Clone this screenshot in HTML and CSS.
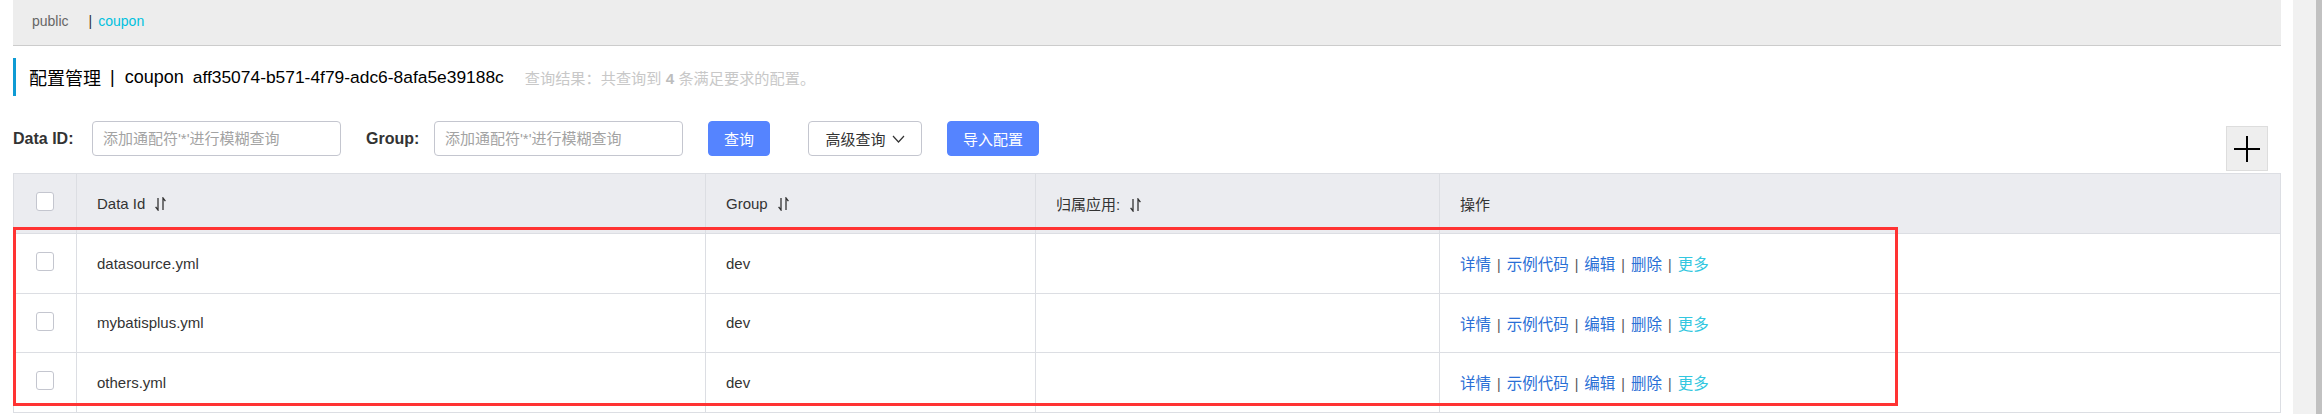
FILE: index.html
```html
<!DOCTYPE html>
<html lang="zh-CN">
<head>
<meta charset="utf-8">
<title>配置管理</title>
<link rel="stylesheet" href="styles.css">
</head>
<body>
<div class="app">
  <div class="page">
    <div class="ns-bar">
      <span class="ns-item">public</span>
      <span class="ns-sep">|</span>
      <span class="ns-item ns-active">coupon</span>
    </div>

    <div class="title">
      <span class="title-main">配置管理</span>
      <span class="title-sep">|</span>
      <span class="title-ns">coupon</span>
      <span class="title-id">aff35074-b571-4f79-adc6-8afa5e39188c</span>
      <span class="title-result">查询结果：共查询到 <b>4</b> 条满足要求的配置。</span>
    </div>

    <div class="search">
      <label class="search-label lbl-id">Data ID:</label>
      <input class="search-input" type="text" placeholder="添加通配符'*'进行模糊查询">
      <label class="search-label lbl-group">Group:</label>
      <input class="search-input" type="text" placeholder="添加通配符'*'进行模糊查询">
      <button class="btn btn-primary btn-query">查询</button>
      <button class="btn btn-normal btn-adv">高级查询<svg class="chev" width="13" height="8" viewBox="0 0 13 8"><path d="M1 1 L6.5 7 L12 1" fill="none" stroke="#333" stroke-width="1.2"/></svg></button>
      <button class="btn btn-primary btn-import">导入配置</button>
      <button class="plus-btn" aria-label="add"><svg width="26" height="26" viewBox="0 0 26 26"><path d="M0 13 H26 M13 0 V26" stroke="#000" stroke-width="2"/></svg></button>
    </div>

    <div class="table-wrap">
      <table class="cfg-table">
        <colgroup>
          <col class="c-check"><col class="c-id"><col class="c-group"><col class="c-app"><col>
        </colgroup>
        <thead>
          <tr>
            <th class="cell-check"><span class="checkbox"></span></th>
            <th>Data Id<svg class="sort" width="11" height="14" viewBox="0 0 11 14"><path d="M3 1 V13 L0.6 9.8 M8 13 V1 L10.4 4.2" fill="none" stroke="#333" stroke-width="1.3"/></svg></th>
            <th>Group<svg class="sort" width="11" height="14" viewBox="0 0 11 14"><path d="M3 1 V13 L0.6 9.8 M8 13 V1 L10.4 4.2" fill="none" stroke="#333" stroke-width="1.3"/></svg></th>
            <th>归属应用:<svg class="sort" width="11" height="14" viewBox="0 0 11 14"><path d="M3 1 V13 L0.6 9.8 M8 13 V1 L10.4 4.2" fill="none" stroke="#333" stroke-width="1.3"/></svg></th>
            <th>操作</th>
          </tr>
        </thead>
        <tbody>
          <tr>
            <td class="cell-check"><span class="checkbox"></span></td>
            <td>datasource.yml</td>
            <td>dev</td>
            <td></td>
            <td class="ops"><a>详情</a><span class="op-sep">|</span><a>示例代码</a><span class="op-sep">|</span><a>编辑</a><span class="op-sep">|</span><a>删除</a><span class="op-sep">|</span><a class="more">更多</a></td>
          </tr>
          <tr>
            <td class="cell-check"><span class="checkbox"></span></td>
            <td>mybatisplus.yml</td>
            <td>dev</td>
            <td></td>
            <td class="ops"><a>详情</a><span class="op-sep">|</span><a>示例代码</a><span class="op-sep">|</span><a>编辑</a><span class="op-sep">|</span><a>删除</a><span class="op-sep">|</span><a class="more">更多</a></td>
          </tr>
          <tr>
            <td class="cell-check"><span class="checkbox"></span></td>
            <td>others.yml</td>
            <td>dev</td>
            <td></td>
            <td class="ops"><a>详情</a><span class="op-sep">|</span><a>示例代码</a><span class="op-sep">|</span><a>编辑</a><span class="op-sep">|</span><a>删除</a><span class="op-sep">|</span><a class="more">更多</a></td>
          </tr>
        </tbody>
      </table>
      <div class="highlight"></div>
    </div>
  </div>
  <div class="scrollbar"><div class="scroll-thumb"></div></div>
</div>
</body>
</html>
```

FILE: styles.css
```css
* { box-sizing: border-box; }

html, body {
  margin: 0;
  padding: 0;
  background: #fff;
  height: 414px;
  overflow: hidden;
}

body {
  font-family: "Liberation Sans", "Noto Sans CJK SC", sans-serif;
  font-size: 14px;
  color: #333;
}

.app {
  display: flex;
  height: 414px;
}

.page {
  flex: 1;
  padding: 0 12px 0 13px;
  min-width: 0;
}

.scrollbar {
  width: 29px;
  background: #f1f1f1;
  display: flex;
  justify-content: flex-end;
}

.scroll-thumb {
  width: 6px;
  background: #c1c1c1;
}

/* namespace bar */
.ns-bar {
  height: 46px;
  background: #ededed;
  border-bottom: 1px solid #cccccc;
  display: flex;
  align-items: center;
  padding: 0 0 3px 19px;
  font-size: 14px;
}

.ns-item { color: #666; }
.ns-sep { color: #333; margin: 0 6px 0 20px; }
.ns-active { color: #00c1de; }

/* title */
.title {
  margin-top: 12px;
  height: 38px;
  border-left: 3px solid #0e9bd4;
  padding-left: 13px;
  display: flex;
  align-items: center;
  color: #000;
  font-size: 18px;
}

.title-sep { margin: 0 10px 0 9px; }
.title-ns { margin-right: 9px; }
.title-id { font-size: 17.4px; }

.title-result {
  margin-left: 21px;
  font-size: 15.2px;
  color: #c8c8c8;
}

.title-result b { color: #bdbdbd; }

/* search row */
.search {
  margin-top: 25px;
  display: flex;
  align-items: flex-start;
}

.search-label {
  height: 35px;
  line-height: 35px;
  font-size: 16px;
  font-weight: bold;
  color: #333;
}

.lbl-id { width: 79px; }
.lbl-group { width: 68px; margin-left: 25px; }

.search-input {
  width: 249px;
  height: 35px;
  border: 1px solid #c4c6cf;
  border-radius: 4px;
  padding: 0 10px;
  font-family: "Liberation Sans", "Noto Sans CJK SC", sans-serif;
  font-size: 15px;
  color: #333;
  outline: none;
}

.search-input::placeholder { color: #a3a3a3; }

.btn {
  height: 35px;
  border-radius: 4px;
  font-family: "Liberation Sans", "Noto Sans CJK SC", sans-serif;
  font-size: 15px;
  padding: 0;
  display: flex;
  align-items: center;
  justify-content: center;
}

.btn-primary {
  background: #5584ff;
  border: 1px solid #5584ff;
  color: #fff;
}

.btn-normal {
  background: #fff;
  border: 1px solid #c4c6cf;
  color: #333;
}

.btn-query { width: 62px; margin-left: 25px; }
.btn-adv { width: 114px; margin-left: 38px; }
.btn-import { width: 92px; margin-left: 25px; }

.chev { margin-left: 6px; }

.plus-btn {
  margin-left: auto;
  margin-right: 13px;
  margin-top: 5px;
  width: 42px;
  height: 45px;
  background: #eeeeee;
  border: 1px solid #dddddd;
  padding: 0;
  display: flex;
  align-items: center;
  justify-content: center;
}

/* table */
.table-wrap {
  position: relative;
  margin-top: 2px;
}

.cfg-table {
  width: 100%;
  border-collapse: collapse;
  table-layout: fixed;
  border: 1px solid #dcdee3;
}

.c-check { width: 63px; }
.c-id { width: 629px; }
.c-group { width: 330px; }
.c-app { width: 404px; }

.cfg-table th,
.cfg-table td {
  border: 1px solid #dcdee3;
  padding: 0 0 0 20px;
  text-align: left;
  vertical-align: middle;
  font-size: 15px;
  color: #333;
}

.cfg-table th {
  height: 60px;
  background: #ebecf0;
  font-weight: normal;
}

.cfg-table td {
  height: 59.5px;
  background: #fff;
}

.cfg-table .cell-check {
  padding: 0;
  text-align: center;
}

.checkbox {
  display: inline-block;
  width: 18px;
  height: 19px;
  border: 1px solid #c4c6cf;
  border-radius: 3px;
  background: #fff;
  vertical-align: middle;
  position: relative;
  top: -2px;
}

.sort {
  margin-left: 10px;
  vertical-align: -2px;
}

.ops a {
  color: #2a6fd6;
  font-size: 15.5px;
  text-decoration: none;
}

.ops a.more { color: #33c7e0; }

.op-sep {
  color: #555;
  margin: 0 6px;
  font-size: 14px;
}

.highlight {
  position: absolute;
  left: 0;
  top: 54px;
  width: 1885px;
  height: 179px;
  border: 3px solid #ff3333;
  pointer-events: none;
}
```
